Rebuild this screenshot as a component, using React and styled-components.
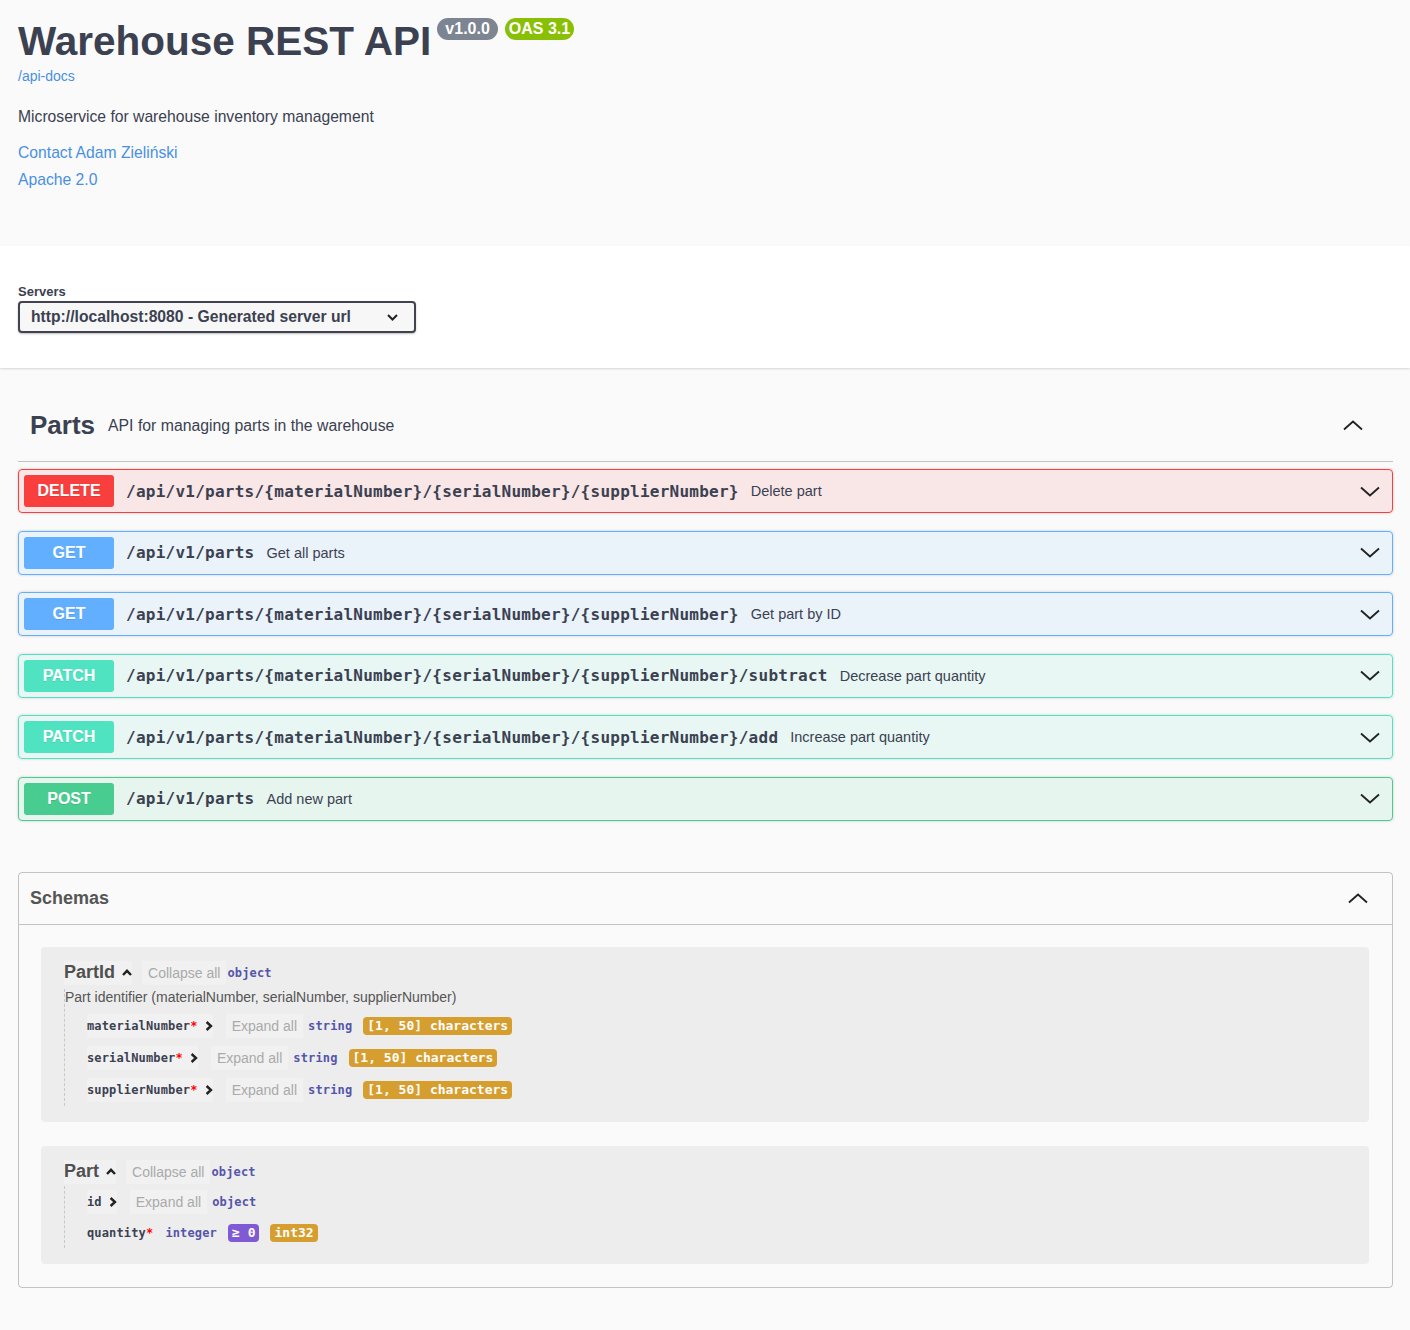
import React from 'react';
import styled, { createGlobalStyle } from 'styled-components';

const GlobalStyle = createGlobalStyle`
  html, body { margin: 0; padding: 0; background: #fafafa; }
  body { font-family: "Liberation Sans", Arial, sans-serif; color: #3b4151; }
  * { box-sizing: border-box; }
`;

const MONO = `"DejaVu Sans Mono", "Liberation Mono", monospace`;

/* ---------- Info ---------- */
const Info = styled.header`
  height: 246px;
  padding: 17px 18px 0;
`;
const TitleRow = styled.div`
  display: flex;
  align-items: flex-start;
  gap: 6px;
`;
const Title = styled.h1`
  margin: 0;
  font-size: 40.5px;
  line-height: 48px;
  font-weight: 700;
  color: #3b4151;
`;
const Badges = styled.div`
  display: flex;
  gap: 7px;
  margin-top: 1px;
`;
const Badge = styled.span`
  display: inline-flex;
  align-items: center;
  height: 22px;
  padding: 0 ${p => p.$pad}px;
  border-radius: 11px;
  background: ${p => p.$bg};
  color: #fff;
  font-size: 16px;
  font-weight: 700;
`;
const DocLink = styled.a`
  display: block;
  margin-top: 3px;
  font-size: 14px;
  line-height: 17px;
  color: #4990e2;
  text-decoration: none;
`;
const Description = styled.p`
  margin: 23px 0 0;
  font-size: 15.7px;
  line-height: 18px;
  color: #3b4151;
`;
const InfoLink = styled.a`
  display: block;
  margin-top: ${p => p.$mt}px;
  font-size: 15.7px;
  line-height: 18px;
  color: #4990e2;
  text-decoration: none;
`;

/* ---------- Servers ---------- */
const ServersBar = styled.section`
  background: #fff;
  box-shadow: 0 1px 2px 0 rgba(0, 0, 0, 0.15);
  padding: 38px 18px 35px;
`;
const ServersLabel = styled.div`
  font-size: 13px;
  line-height: 15px;
  font-weight: 700;
  color: #3b4151;
  margin-bottom: 2px;
`;
const Select = styled.div`
  width: 398px;
  height: 32px;
  display: flex;
  align-items: center;
  justify-content: space-between;
  padding: 0 16px 0 11px;
  border: 2px solid #41444e;
  border-radius: 4px;
  background: #f7f7f7;
  box-shadow: 0 1px 2px 0 rgba(0, 0, 0, 0.25);
  font-size: 15.7px;
  font-weight: 700;
  color: #3b4151;
`;

/* ---------- Operations ---------- */
const Ops = styled.section`
  padding: 0 17px 0 18px;
`;
const TagHeader = styled.div`
  margin-top: 20px;
  height: 74px;
  display: flex;
  align-items: center;
  padding: 2px 30px 0 12px;
  border-bottom: 1px solid rgba(59, 65, 81, 0.3);
`;
const TagName = styled.h3`
  margin: 0;
  font-size: 26px;
  font-weight: 700;
  color: #3b4151;
`;
const TagDesc = styled.span`
  flex: 1;
  margin-left: 13px;
  font-size: 15.8px;
  color: #3b4151;
`;
const OpList = styled.div`
  margin-top: 7px;
  display: flex;
  flex-direction: column;
  gap: 17.6px;
`;
const METHODS = {
  DELETE: { c: '#f93e3e', bg: 'rgba(249,62,62,.1)' },
  GET: { c: '#61affe', bg: 'rgba(97,175,254,.1)' },
  PATCH: { c: '#50e3c2', bg: 'rgba(80,227,194,.1)' },
  POST: { c: '#49cc90', bg: 'rgba(73,204,144,.1)' },
};
const OpBlock = styled.div`
  height: 44px;
  display: flex;
  align-items: center;
  padding: 0 12px 0 5px;
  border: 1px solid ${p => METHODS[p.$m].c};
  border-radius: 4px;
  background: ${p => METHODS[p.$m].bg};
  box-shadow: 0 0 3px rgba(0, 0, 0, 0.19);
`;
const Method = styled.span`
  width: 90px;
  height: 32px;
  display: flex;
  align-items: center;
  justify-content: center;
  border-radius: 3px;
  background: ${p => METHODS[p.$m].c};
  color: #fff;
  font-size: 16px;
  font-weight: 700;
  text-shadow: 0 1px 0 rgba(0, 0, 0, 0.1);
`;
const OpPath = styled.span`
  margin-left: 12px;
  font-family: ${MONO};
  font-size: 16px;
  font-weight: 700;
  letter-spacing: 0.25px;
  color: #3b4151;
`;
const OpSummary = styled.span`
  flex: 1;
  margin-left: 12px;
  font-size: 14.5px;
  color: #3b4151;
`;

/* ---------- Icons ---------- */
const ArrowSvg = styled.svg`
  flex: none;
  display: block;
  transform: ${p => (p.$up ? 'rotate(180deg)' : 'none')};
`;
const Arrow = ({ up }) => (
  <ArrowSvg $up={up} width="20" height="11" viewBox="0 0 20 11">
    <path d="M1 1.5 L10 9.5 L19 1.5" fill="none" stroke="#222" strokeWidth="1.8" />
  </ArrowSvg>
);
const ChevronUp = () => (
  <ArrowSvg width="10" height="7" viewBox="0 0 10 7">
    <path d="M1 6 L5 1.8 L9 6" fill="none" stroke="#222" strokeWidth="2.4" />
  </ArrowSvg>
);
const ChevronRight = () => (
  <ArrowSvg width="8" height="10" viewBox="0 0 8 10">
    <path d="M1.6 1 L6 5 L1.6 9" fill="none" stroke="#222" strokeWidth="2.4" />
  </ArrowSvg>
);

/* ---------- Schemas ---------- */
const Schemas = styled.section`
  margin: 51px 17px 42px 18px;
  border: 1px solid rgba(59, 65, 81, 0.3);
  border-radius: 4px;
`;
const SchemasHeader = styled.div`
  height: 52px;
  display: flex;
  align-items: center;
  justify-content: space-between;
  padding: 0 24px 0 11px;
  border-bottom: 1px solid rgba(59, 65, 81, 0.3);
`;
const SchemasTitle = styled.h4`
  margin: 0;
  font-size: 18px;
  font-weight: 700;
  color: #555;
`;
const SchemasBody = styled.div`
  padding: 22px 23px 23px 22px;
  display: flex;
  flex-direction: column;
  gap: 24px;
`;
const ModelBox = styled.div`
  background: rgba(0, 0, 0, 0.05);
  border-radius: 4px;
  padding: 15px 23px 16px;
`;
const ModelHead = styled.div`
  display: flex;
  align-items: center;
  height: 22px;
`;
const ToggleBtn = styled.span`
  display: inline-flex;
  align-items: center;
  gap: 7px;
  height: 24px;
  background: rgba(255, 255, 255, 0.22);
`;
const ModelTitle = styled.span`
  font-size: 18px;
  font-weight: 700;
  color: #505050;
`;
const ActionBtn = styled.span`
  display: inline-flex;
  align-items: center;
  height: 24px;
  padding: 0 6px;
  margin-left: ${p => p.$ml}px;
  background: rgba(255, 255, 255, 0.22);
  font-size: 14px;
  color: #aaa;
`;
const TypeName = styled.span`
  margin-left: ${p => p.$ml}px;
  font-family: ${MONO};
  font-size: 12px;
  font-weight: 700;
  letter-spacing: 0.15px;
  color: #55a;
`;
const ModelBody = styled.div`
  margin-top: ${p => p.$mt}px;
  border-left: 1px dashed #c8c8c8;
`;
const ModelDesc = styled.div`
  font-size: 14px;
  line-height: 17px;
  color: #555;
  margin-bottom: 4px;
`;
const PropRow = styled.div`
  display: flex;
  align-items: center;
  padding: 4px 0 4px 22px;
  min-height: ${p => (p.$tall ? 32 : 30)}px;
`;
const PropName = styled.span`
  font-family: ${MONO};
  font-size: 12px;
  font-weight: 700;
  letter-spacing: 0.15px;
  color: #3b4151;
  line-height: 22px;
`;
const Req = styled.span`
  color: #f00;
`;
const Constraint = styled.span`
  margin-left: 11px;
  padding: 0 4px;
  height: 18px;
  line-height: 18px;
  border-radius: 4px;
  background: ${p => p.$bg};
  color: #fff;
  font-family: ${MONO};
  font-size: 13px;
  font-weight: 700;
`;

const ops = [
  { m: 'DELETE', p: '/api/v1/parts/{materialNumber}/{serialNumber}/{supplierNumber}', s: 'Delete part' },
  { m: 'GET', p: '/api/v1/parts', s: 'Get all parts' },
  { m: 'GET', p: '/api/v1/parts/{materialNumber}/{serialNumber}/{supplierNumber}', s: 'Get part by ID' },
  { m: 'PATCH', p: '/api/v1/parts/{materialNumber}/{serialNumber}/{supplierNumber}/subtract', s: 'Decrease part quantity' },
  { m: 'PATCH', p: '/api/v1/parts/{materialNumber}/{serialNumber}/{supplierNumber}/add', s: 'Increase part quantity' },
  { m: 'POST', p: '/api/v1/parts', s: 'Add new part' },
];

const STRING_PROPS = ['materialNumber', 'serialNumber', 'supplierNumber'];

export default function App() {
  return (
    <>
      <GlobalStyle />
      <Info>
        <TitleRow>
          <Title>Warehouse REST API</Title>
          <Badges>
            <Badge $bg="#7d8492" $pad={8}>v1.0.0</Badge>
            <Badge $bg="#89bf04" $pad={4}>OAS 3.1</Badge>
          </Badges>
        </TitleRow>
        <DocLink href="#">/api-docs</DocLink>
        <Description>Microservice for warehouse inventory management</Description>
        <InfoLink $mt={18} href="#">Contact Adam Zieliński</InfoLink>
        <InfoLink $mt={9} href="#">Apache 2.0</InfoLink>
      </Info>

      <ServersBar>
        <ServersLabel>Servers</ServersLabel>
        <Select>
          <span>http://localhost:8080 - Generated server url</span>
          <ArrowSvg width="11" height="7" viewBox="0 0 11 7">
            <path d="M1 1 L5.5 5.5 L10 1" fill="none" stroke="#222" strokeWidth="2" />
          </ArrowSvg>
        </Select>
      </ServersBar>

      <Ops>
        <TagHeader>
          <TagName>Parts</TagName>
          <TagDesc>API for managing parts in the warehouse</TagDesc>
          <Arrow up />
        </TagHeader>
        <OpList>
          {ops.map((o, i) => (
            <OpBlock key={i} $m={o.m}>
              <Method $m={o.m}>{o.m}</Method>
              <OpPath>{o.p}</OpPath>
              <OpSummary>{o.s}</OpSummary>
              <Arrow />
            </OpBlock>
          ))}
        </OpList>
      </Ops>

      <Schemas>
        <SchemasHeader>
          <SchemasTitle>Schemas</SchemasTitle>
          <Arrow up />
        </SchemasHeader>
        <SchemasBody>
          <ModelBox>
            <ModelHead>
              <ToggleBtn>
                <ModelTitle>PartId</ModelTitle>
                <ChevronUp />
              </ToggleBtn>
              <ActionBtn $ml={10}>Collapse all</ActionBtn>
              <TypeName $ml={1}>object</TypeName>
            </ModelHead>
            <ModelBody $mt={5}>
              <ModelDesc>Part identifier (materialNumber, serialNumber, supplierNumber)</ModelDesc>
              {STRING_PROPS.map(n => (
                <PropRow key={n} $tall>
                  <ToggleBtn>
                    <PropName>{n}<Req>*</Req></PropName>
                    <ChevronRight />
                  </ToggleBtn>
                  <ActionBtn $ml={13}>Expand all</ActionBtn>
                  <TypeName $ml={5}>string</TypeName>
                  <Constraint $bg="#d69e2e">[1, 50] characters</Constraint>
                </PropRow>
              ))}
            </ModelBody>
          </ModelBox>

          <ModelBox>
            <ModelHead>
              <ToggleBtn>
                <ModelTitle>Part</ModelTitle>
                <ChevronUp />
              </ToggleBtn>
              <ActionBtn $ml={10}>Collapse all</ActionBtn>
              <TypeName $ml={1}>object</TypeName>
            </ModelHead>
            <ModelBody $mt={3}>
              <PropRow $tall>
                <ToggleBtn>
                  <PropName>id</PropName>
                  <ChevronRight />
                </ToggleBtn>
                <ActionBtn $ml={13}>Expand all</ActionBtn>
                <TypeName $ml={5}>object</TypeName>
              </PropRow>
              <PropRow>
                <PropName>quantity<Req>*</Req></PropName>
                <TypeName $ml={12}>integer</TypeName>
                <Constraint $bg="#805ad5">≥ 0</Constraint>
                <Constraint $bg="#d69e2e">int32</Constraint>
              </PropRow>
            </ModelBody>
          </ModelBox>
        </SchemasBody>
      </Schemas>
    </>
  );
}
